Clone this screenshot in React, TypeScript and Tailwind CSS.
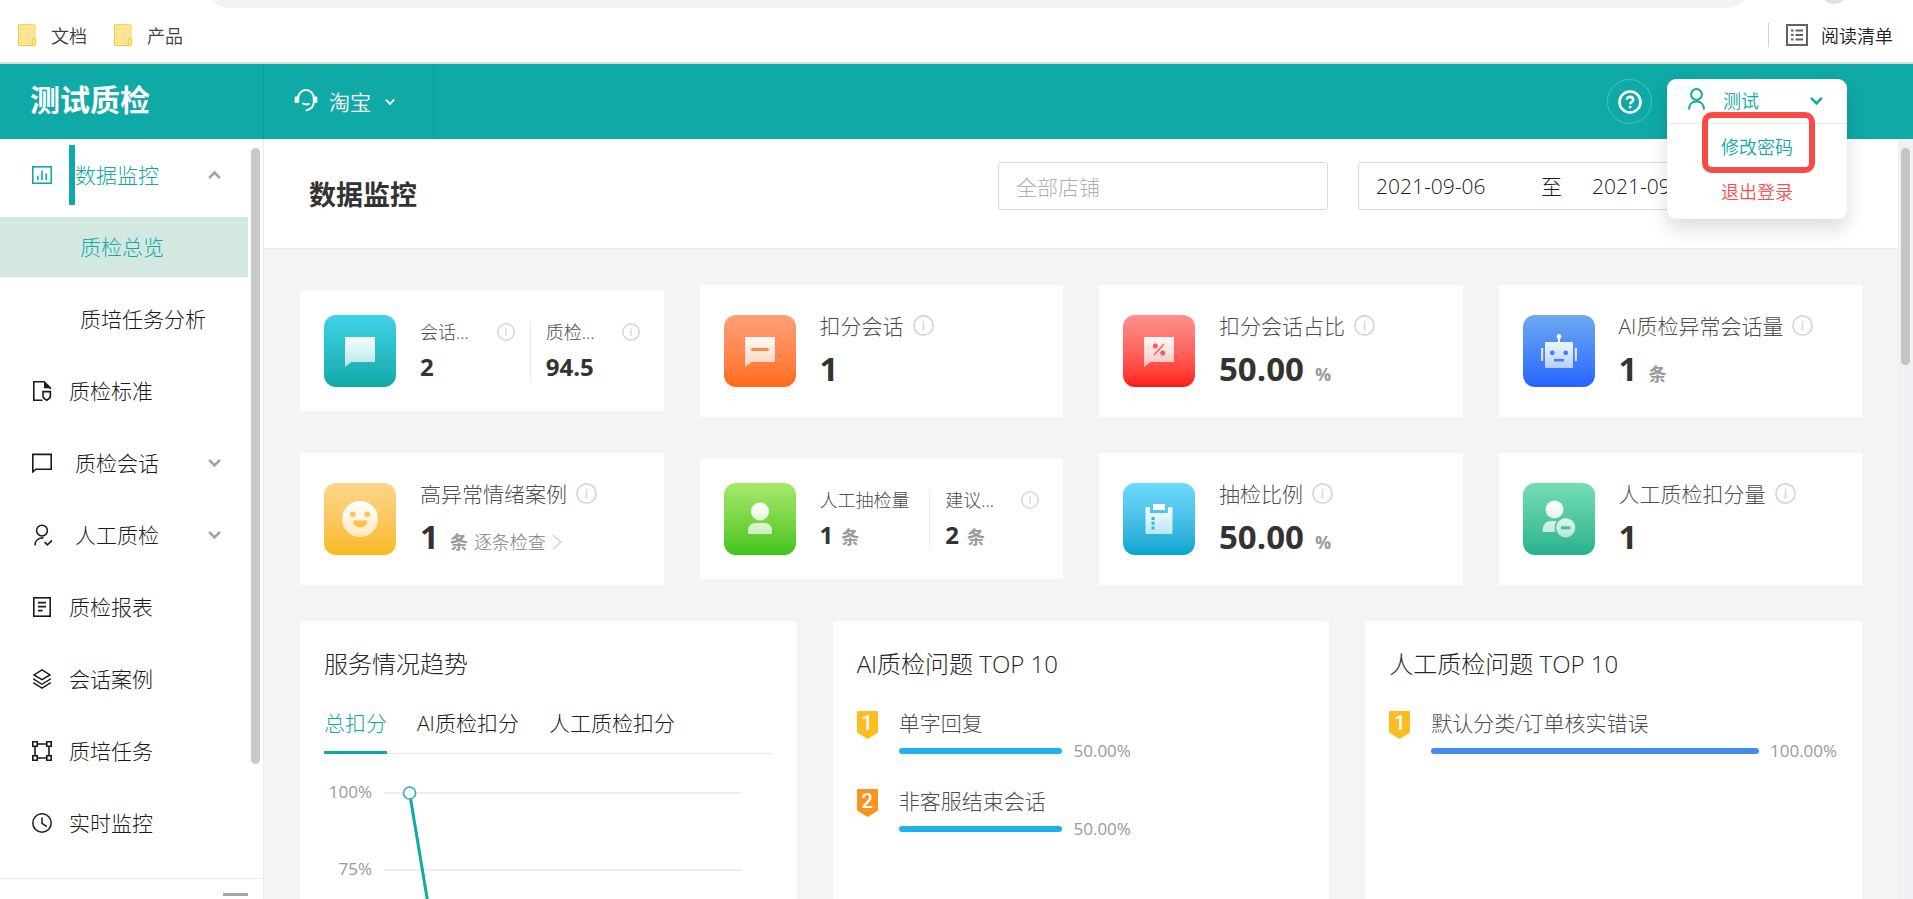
import React, { useState } from 'react';

type IconProps = { className?: string };

const ChevronDown = ({ className }: IconProps) => (
  <svg viewBox="0 0 14 10" className={className} fill="none" stroke="currentColor" strokeWidth="2.6">
    <path d="M1.2 1.6 7 7.6 12.8 1.6" />
  </svg>
);

const InfoIcon = ({ className }: IconProps) => (
  <svg viewBox="0 0 21 21" className={className} fill="none" stroke="#d6d6d6" strokeWidth="1.7">
    <circle cx="10.5" cy="10.5" r="9.6" />
    <path d="M10.5 8.8v6.6M10.5 5.4v2" />
  </svg>
);

const FolderIcon = () => (
  <svg viewBox="0 0 18 22" className="w-[18px] h-[22px]">
    <rect x="0.5" y="0.5" width="16.5" height="21" rx="1" fill="#ffe591" stroke="#f5d55f" />
    <path d="M0.5 1v20.5H17" fill="none" stroke="#f0cb4a" />
    <path d="M14.2 21.2v-5a1.6 1.6 0 0 1 3.2 0v3.6a1.5 1.5 0 0 1-1.5 1.5z" fill="#ffe591" stroke="#eec43c" />
  </svg>
);

/* ---------- sidebar icons ---------- */

const ico = 'w-5 h-5 shrink-0';

const ChartIcon = () => (
  <svg viewBox="0 0 20 20" className={ico} fill="none" stroke="currentColor" strokeWidth="1.6">
    <rect x="0.8" y="1.8" width="18.4" height="16.4" />
    <path d="M5.8 10.8v4.4M10 5.4v9.8M14.2 8.4v6.8" />
  </svg>
);

const StandardIcon = () => (
  <svg viewBox="0 0 20 20" className={ico} fill="none" stroke="currentColor" strokeWidth="1.6">
    <path d="M10.5 19.2H1.8V.8h10.4l6 6V8" />
    <path d="M12 .8v6.4h6.4z" fill="currentColor" stroke="none" />
    <path d="M11 10.6h7.4v4.4c0 2-1.6 3.2-3.7 4.2-2.1-1-3.7-2.2-3.7-4.2z" />
  </svg>
);

const MessageIcon = () => (
  <svg viewBox="0 0 20 20" className={ico} fill="none" stroke="currentColor" strokeWidth="1.6">
    <path d="M.8 1.4h18.4v14.8H4L.8 18.8z" />
  </svg>
);

const PersonCheckIcon = () => (
  <svg viewBox="0 0 20 22" className="w-5 h-[22px] shrink-0" fill="none" stroke="currentColor" strokeWidth="1.6">
    <circle cx="10" cy="6.6" r="5.4" />
    <path d="M3 21.2c0-4.6 3.4-7.4 8.6-7.4M12.6 18l2.8 2.9 4.6-4.6" />
  </svg>
);

const ReportIcon = () => (
  <svg viewBox="0 0 20 20" className={ico} fill="none" stroke="currentColor" strokeWidth="1.6">
    <rect x="1.8" y=".8" width="16.4" height="18.4" />
    <path d="M6 5.6h8M6 9.6h8M6 13.6h4.6" />
  </svg>
);

const LayersIcon = () => (
  <svg viewBox="0 0 20 21" className={ico} fill="none" stroke="currentColor" strokeWidth="1.5">
    <path d="m10 1 8.4 5.2L10 11.2 1.6 6.2zM.8 10.4 10 16l9.2-5.6M.8 14.4 10 20l9.2-5.6" />
  </svg>
);

const NodesIcon = () => (
  <svg viewBox="0 0 20 20" className={ico} fill="none" stroke="currentColor" strokeWidth="1.6">
    <path d="M5.4 3h9.2M5.4 17h9.2M3 5.4v9.2M17 5.4v9.2" />
    <path d="M.8.8h4.4v4.4H.8zM14.8.8h4.4v4.4h-4.4zM.8 14.8h4.4v4.4H.8zM14.8 14.8h4.4v4.4h-4.4z" />
  </svg>
);

const ClockIcon = () => (
  <svg viewBox="0 0 20 20" className={ico} fill="none" stroke="currentColor" strokeWidth="1.5">
    <circle cx="10" cy="10" r="9.2" />
    <path d="M10 4.6v5.8l4.8 3.2" />
  </svg>
);

/* ---------- stat card icons, drawn on a 72px tile ---------- */

const white = 'url(#fade)';
const bubble = 'M22 22h28q1 0 1 1v23q0 1-1 1H27.5L21 52V23q0-1 1-1z';

const glyphs: Record<string, React.ReactNode> = {
  chat: <path d={bubble} fill={white} />,
  chatMinus: (
    <>
      <path d={bubble} fill={white} />
      <path d="M28.5 34.5h15" stroke="#ff8546" strokeWidth="3" strokeLinecap="round" />
    </>
  ),
  chatPercent: (
    <>
      <path d={bubble} fill={white} />
      <path d="M41 29 31 40" stroke="#ff5a5a" strokeWidth="1.4" />
      <circle cx="32.3" cy="31" r="2.5" fill="#ff5a5a" />
      <circle cx="39.7" cy="38" r="2.5" fill="#ff5a5a" />
    </>
  ),
  robot: (
    <>
      <path d="M35 23h2v5h-2z" fill="#fff" />
      <circle cx="36" cy="21.5" r="2.4" fill="#fff" />
      <path d="M23 27h26q1 0 1 1v24q0 1-1 1H23q-1 0-1-1V28q0-1 1-1zM18 33h2.2v13H18zM51.8 33H54v13h-2.2z" fill={white} />
      <circle cx="29.3" cy="37.8" r="2.4" fill="#447ff5" />
      <circle cx="42.7" cy="37.8" r="2.4" fill="#447ff5" />
      <path d="M31 45.2h10" stroke="#447ff5" strokeWidth="2.6" />
    </>
  ),
  smile: (
    <>
      <circle cx="36" cy="36" r="18" fill={white} />
      <circle cx="28.8" cy="31.2" r="2.8" fill="#fbc554" />
      <circle cx="43.2" cy="31.2" r="2.8" fill="#fbc554" />
      <path d="M29 37.5h14.4a7.2 7 0 0 1-14.4 0z" fill="#fbc246" />
    </>
  ),
  person: (
    <>
      <circle cx="36" cy="28.5" r="9" fill={white} />
      <path d="M24 51v-3q0-8 8-8h8q8 0 8 8v3z" fill={white} />
    </>
  ),
  clipboard: (
    <>
      <path d="M23.5 24H27v6h18v-6h3.5q1 0 1 1v25q0 1-1 1h-25q-1 0-1-1V25q0-1 1-1z" fill={white} />
      <path d="M30 21h12v6H30z" fill="#fff" />
      <path d="M28.5 34h3v3h-3zM28.5 38.8h3v3h-3zM28.5 43.5h3v3h-3z" fill="#2bb9df" />
    </>
  ),
  personMinus: (
    <>
      <circle cx="31.5" cy="26.5" r="9" fill={white} />
      <path d="M19.5 49v-1.5q0-9.5 9.5-9.5h4.5q-2.8 5-1.5 11z" fill={white} />
      <circle cx="42.7" cy="44.8" r="9.6" fill={white} />
      <path d="M38 44.8h9.4" stroke="#42c19b" strokeWidth="3" />
    </>
  ),
};

const tileColors: Record<string, string> = {
  chat: 'from-[#3fd2e8] to-[#0fa9a6]',
  chatMinus: 'from-[#ffa077] to-[#ff6c12]',
  chatPercent: 'from-[#ff9090] to-[#ff1414]',
  robot: 'from-[#70a8f0] to-[#2962ff]',
  smile: 'from-[#fdd58a] to-[#f9b914]',
  person: 'from-[#a7e86a] to-[#3fc415]',
  clipboard: 'from-[#6fdaff] to-[#00a6cf]',
  personMinus: 'from-[#74deb4] to-[#24b28f]',
};

function Tile({ kind }: { kind: string }) {
  return (
    <div className={`w-[72px] h-[72px] shrink-0 rounded-xl bg-gradient-to-b ${tileColors[kind]}`}>
      <svg viewBox="0 0 72 72" className="w-full h-full">
        {glyphs[kind]}
      </svg>
    </div>
  );
}

/* ---------- cards ---------- */

type Stat = { label: string; value: string; unit?: string; info?: boolean; link?: string };

function StatCard({ kind, stat }: { kind: string; stat: Stat }) {
  return (
    <div className="flex gap-6 bg-white px-6 py-[30px]">
      <Tile kind={kind} />
      <div>
        <div className="flex items-center gap-[9px] h-[22px] text-[21px] text-[#4d4d4d]">
          <span className="whitespace-nowrap leading-[30px]">{stat.label}</span>
          <InfoIcon className="w-[21px] h-[21px] shrink-0 mb-px" />
        </div>
        <div className="flex items-baseline h-[42px] mt-2 leading-[48px]">
          <span className="text-[33px] font-bold text-[#333]">{stat.value}</span>
          {stat.unit && <span className="ml-[11px] text-lg leading-none font-bold text-[#999]">{stat.unit}</span>}
          {stat.link && (
            <a href="#" className="ml-1.5 flex items-center gap-1.5 text-lg leading-none text-[#808080]">
              {stat.link}
              <svg viewBox="0 0 10 16" className="w-2.5 h-4" fill="none" stroke="#d0d0d0" strokeWidth="1.3">
                <path d="M.8 1 9 8 .8 15" />
              </svg>
            </a>
          )}
        </div>
      </div>
    </div>
  );
}

function DoubleCard({ kind, stats }: { kind: string; stats: Stat[] }) {
  return (
    <div className="flex gap-6 self-center bg-white p-6">
      <Tile kind={kind} />
      <div className="flex flex-1 min-w-0 items-center">
        {stats.map((s, i) => (
          <div key={s.label} className={i === 0 ? 'w-1/2 pr-[15px]' : 'w-1/2 pl-[15px] border-l border-[#ebebeb]'}>
            <div className="flex items-center justify-between h-[22px] text-lg text-[#4d4d4d]">
              <span className="whitespace-nowrap">{s.label}</span>
              {s.info && <InfoIcon className="w-[18px] h-[18px] shrink-0" />}
            </div>
            <div className="flex items-baseline h-[38px]">
              <span className="text-2xl leading-[48px] font-bold text-[#333]">{s.value}</span>
              {s.unit && <span className="ml-2 text-lg leading-none font-bold text-[#999]">{s.unit}</span>}
            </div>
          </div>
        ))}
      </div>
    </div>
  );
}

function Panel({ title, children }: { title: string; children: React.ReactNode }) {
  return (
    <section className="h-[480px] bg-white rounded-sm px-6 pt-6">
      <h2 className="text-2xl leading-[38px] h-9 text-[#262626]">{title}</h2>
      {children}
    </section>
  );
}

function TrendChart() {
  const ticks = ['100%', '75%', '50%', '25%', '0%'];
  return (
    <div className="flex gap-3 mt-[26px] pr-[30px]">
      <div className="w-12 text-[17px] leading-6 font-normal text-right text-[#999]">
        {ticks.map((t) => (
          <div key={t} className="h-[77px]">{t}</div>
        ))}
      </div>
      <svg className="flex-1 h-[360px]">
        {ticks.map((t, i) => (
          <line key={t} x1="0" x2="100%" y1={13 + i * 77} y2={13 + i * 77} stroke="#e8e8e8" strokeWidth="1.5" />
        ))}
        <line x1="7.14%" y1="13" x2="21.42%" y2="321" stroke="#0fa9a6" strokeWidth="3" />
        <circle cx="7.14%" cy="13" r="6" fill="#fff" stroke="#2cb3b1" strokeWidth="1.6" />
      </svg>
    </div>
  );
}

type Problem = { name: string; percent: number; color: string };

function RankList({ items }: { items: Problem[] }) {
  return (
    <ol className="mt-6 flex flex-col gap-[18px]">
      {items.map((item, i) => (
        <li key={item.name} className="flex gap-[21px] h-[60px]">
          <div className="relative w-[21px] h-7 mt-1.5 shrink-0">
            <svg viewBox="0 0 21 28" className={i === 0 ? 'w-full text-[#fbbd1f]' : 'w-full text-[#fa9420]'}>
              <path d="M1 0h19q1 0 1 1v20.5L10.5 28 0 21.5V1q0-1 1-1z" fill="currentColor" />
            </svg>
            <span className="absolute inset-x-0 top-0 text-center text-xl leading-6 font-medium font-['Roboto',sans-serif] text-white">
              {i + 1}
            </span>
          </div>
          <div className="flex-1 min-w-0">
            <div className="text-[21px] leading-9 text-[#4d4d4d]">{item.name}</div>
            <div className="flex items-center h-5 mr-[79px]">
              <div className="h-1.5 rounded-full shrink-0" style={{ width: `${item.percent}%`, background: item.color }} />
              <span className="ml-[11px] text-[17px] leading-5 font-normal text-[#999]">{item.percent.toFixed(2)}%</span>
            </div>
          </div>
        </li>
      ))}
    </ol>
  );
}

/* ---------- layout ---------- */

function BookmarkBar() {
  return (
    <div className="relative flex items-center h-16 shrink-0 overflow-hidden bg-white border-b-2 border-[#d8dcde] pl-[18px] pr-5 pt-2 text-lg font-[350] text-[#3c4043]">
      <div className="absolute left-[206px] right-[162px] -top-10 h-12 rounded-full bg-[#f1f3f4]" />
      <div className="absolute right-[66px] -top-[22px] w-[26px] h-[26px] rounded-full bg-[#dee1e6]" />
      <a href="#" className="flex items-center gap-[15px]">
        <FolderIcon />
        <span className="pt-0.5">文档</span>
      </a>
      <a href="#" className="flex items-center gap-[15px] ml-[27px]">
        <FolderIcon />
        <span className="pt-0.5">产品</span>
      </a>
      <button className="ml-auto flex items-center gap-[13px] text-[#202124]">
        <span className="w-px h-6 mr-1 bg-[#cfd1d4]" />
        <svg viewBox="0 0 22 22" className="w-[22px] h-[22px]" fill="none" stroke="#5f6368" strokeWidth="2">
          <rect x="1" y="1" width="20" height="20" />
          <path d="M5 6.5h2.6M5 11h2.6M5 15.5h2.6M9.5 6.5H17M9.5 11H17M9.5 15.5H17" />
        </svg>
        <span className="pt-0.5">阅读清单</span>
      </button>
    </div>
  );
}

function UserMenu() {
  return (
    <div className="absolute top-[15px] right-[66px] z-10 w-[180px] h-[140px] rounded-[9px] bg-white shadow-[0_10px_20px_rgba(0,0,0,0.14)] text-lg font-[350] text-[#0fa9a6]">
      <button className="flex items-center w-full h-[45px] pl-[21px] pr-6 border-b border-[#ebebeb]">
        <svg viewBox="0 0 17 22" className="w-[17px] h-[22px] mb-1" fill="none" stroke="currentColor" strokeWidth="2">
          <circle cx="8.5" cy="6.5" r="5.4" />
          <path d="M1 21.5c0-5 3-8 7.5-8s7.5 3 7.5 8" />
        </svg>
        <span className="ml-[18px]">测试</span>
        <ChevronDown className="w-[13px] h-[10px] ml-auto" />
      </button>
      <div className="flex flex-col items-center pr-2">
        <button className="h-[45px] pl-2">修改密码</button>
        <button className="h-[45px] pl-2 text-[#ff4d4f]">退出登录</button>
      </div>
      <div className="absolute left-[35px] top-[33px] w-[113px] h-[61px] rounded-[10px] border-[6px] border-[#f84b48] pointer-events-none" />
    </div>
  );
}

function Header() {
  return (
    <header className="relative flex items-stretch h-[75px] shrink-0 bg-[#0fa9a6] text-white">
      <div className="w-[264px] pl-[30px] border-r border-[#0c9d9a] text-[30px] leading-[71px] font-bold">测试质检</div>
      <button className="flex items-center w-[170px] pl-[30px] border-r border-[#0c9d9a] text-[21px] font-[350]">
        <svg viewBox="0 0 24 23" className="w-6 h-[23px] mb-0.5" fill="none" stroke="currentColor" strokeWidth="2">
          <path d="M4.2 13.5V9a7.8 8 0 0 1 15.6 0v4.5q-.4 6.500-8 7.900" />
          <path d="M2.400 7.500v6.500M21.600 7.500v6.500" strokeWidth="3.4" />
          <path d="M8.4 14q3 2.600 7.200.6" />
        </svg>
        <span className="ml-[11px] pt-0.5">淘宝</span>
        <ChevronDown className="w-[10px] h-[8px] ml-3.5" />
      </button>
      <button
        aria-label="帮助"
        className="ml-auto mr-[261px] self-center w-[45px] h-[45px] rounded-full border border-white/25 flex items-center justify-center"
      >
        <svg viewBox="0 0 24 24" className="w-6 h-6" fill="none" stroke="currentColor" strokeWidth="2.6">
          <circle cx="12" cy="12" r="10.5" />
          <path d="M8.8 9.8c0-4 6.4-3.800 6.4 0 0 2.200-3.100 2.200-3.100 4.400M12.1 15.700v2.500" />
        </svg>
      </button>
      <UserMenu />
    </header>
  );
}

const leafItems = [
  { label: '质检报表', icon: <ReportIcon /> },
  { label: '会话案例', icon: <LayersIcon /> },
  { label: '质培任务', icon: <NodesIcon /> },
  { label: '实时监控', icon: <ClockIcon /> },
];

const rowClass = 'flex items-center w-full h-[60px] pl-8';
const subClass = 'flex items-center h-[60px] pt-0.5 pl-20 shrink-0';

function Sidebar() {
  return (
    <aside className="flex flex-col w-[264px] shrink-0 bg-white border-r border-[#ebebeb] text-[21px] text-[#1a1a1a]">
      <div className="flex flex-1 min-h-0 overflow-hidden">
        <nav className="flex flex-col flex-1 gap-3 pt-1.5">
          <button className={`${rowClass} text-[#0fa9a6]`}>
            <ChartIcon />
            <span className="w-1.5 h-[60px] ml-[17px] bg-[#0fa9a6]" />
            <span className="pt-0.5">数据监控</span>
            <ChevronDown className="w-[13px] h-[10px] ml-auto mr-[27px] rotate-180 text-[#a0a0a0]" />
          </button>
          <a href="#" className={`${subClass} bg-[#d2e8e1] text-[#0fa9a6]`}>质检总览</a>
          <a href="#" className={subClass}>质培任务分析</a>
          <a href="#" className={rowClass}>
            <StandardIcon />
            <span className="ml-[17px] pt-0.5">质检标准</span>
          </a>
          <button className={rowClass}>
            <MessageIcon />
            <span className="ml-[23px] pt-0.5">质检会话</span>
            <ChevronDown className="w-[13px] h-[10px] ml-auto mr-[27px] text-[#a0a0a0]" />
          </button>
          <button className={rowClass}>
            <PersonCheckIcon />
            <span className="ml-[23px] pt-0.5">人工质检</span>
            <ChevronDown className="w-[13px] h-[10px] ml-auto mr-[27px] text-[#a0a0a0]" />
          </button>
          {leafItems.map((item) => (
            <a key={item.label} href="#" className={rowClass}>
              {item.icon}
              <span className="ml-[17px] pt-0.5">{item.label}</span>
            </a>
          ))}
        </nav>
        <div className="w-[15px] shrink-0 pt-[9px] pl-[3px]">
          <div className="w-[9px] h-[616px] rounded-full bg-[#c8c8c8]" />
        </div>
      </div>
      <button aria-label="收起菜单" className="h-[21px] shrink-0 border-t border-[#ebebeb] pr-[15px] pt-[14px] flex justify-end items-start">
        <span className="w-[25px] h-[3px] bg-[#a6a6a6]" />
      </button>
    </aside>
  );
}

export default function App() {
  const tabs = ['总扣分', 'AI质检扣分', '人工质检扣分'];
  const [tab, setTab] = useState(tabs[0]);
  const [shop, setShop] = useState('');
  const [startDate, setStartDate] = useState('2021-09-06');
  const [endDate, setEndDate] = useState('2021-09-12');

  return (
    <div className="flex flex-col h-screen overflow-hidden font-light font-['Open_Sans','Noto_Sans_CJK_SC',sans-serif]">
      <BookmarkBar />
      <Header />
      <div className="flex flex-1 min-h-0">
        <Sidebar />
        <main className="flex-1 min-w-0 overflow-hidden bg-[#f3f5f4]">
          <div className="flex items-center h-[110px] pl-[45px] pr-24 bg-white border-b border-[#ebebeb]">
            <h1 className="flex-1 pt-1 text-[27px] font-bold text-[#333]">数据监控</h1>
            <div className="flex gap-[30px] mb-[15px]">
              <input
                type="text"
                aria-label="店铺"
                placeholder="全部店铺"
                value={shop}
                onChange={(e) => setShop(e.target.value)}
                className="w-[330px] h-12 px-[17px] pt-0.5 border border-[#d9d9d9] rounded-[3px] text-[21px] text-[#333] placeholder:text-[#b0b0b0]"
              />
              <div className="flex items-center w-[444px] h-12 px-[17px] pt-0.5 border border-[#d9d9d9] rounded-[3px] text-[21px] text-[#1a1a1a]">
                <input type="text" aria-label="开始日期" value={startDate} onChange={(e) => setStartDate(e.target.value)} className="w-[150px]" />
                <span className="w-[66px] pl-[15px]">至</span>
                <input type="text" aria-label="结束日期" value={endDate} onChange={(e) => setEndDate(e.target.value)} className="w-[150px]" />
              </div>
            </div>
          </div>

          <div className="p-9">
            <div className="grid grid-cols-4 gap-9">
              <DoubleCard
                kind="chat"
                stats={[
                  { label: '会话...', value: '2', info: true },
                  { label: '质检...', value: '94.5', info: true },
                ]}
              />
              <StatCard kind="chatMinus" stat={{ label: '扣分会话', value: '1' }} />
              <StatCard kind="chatPercent" stat={{ label: '扣分会话占比', value: '50.00', unit: '%' }} />
              <StatCard kind="robot" stat={{ label: 'AI质检异常会话量', value: '1', unit: '条' }} />
              <StatCard kind="smile" stat={{ label: '高异常情绪案例', value: '1', unit: '条', link: '逐条检查' }} />
              <DoubleCard
                kind="person"
                stats={[
                  { label: '人工抽检量', value: '1', unit: '条' },
                  { label: '建议...', value: '2', unit: '条', info: true },
                ]}
              />
              <StatCard kind="clipboard" stat={{ label: '抽检比例', value: '50.00', unit: '%' }} />
              <StatCard kind="personMinus" stat={{ label: '人工质检扣分量', value: '1' }} />
            </div>

            <div className="grid grid-cols-3 gap-9 mt-9">
              <Panel title="服务情况趋势">
                <div className="flex gap-[30px] h-[49px] mt-6 border-b border-[#ebebeb] text-[21px] leading-9">
                  {tabs.map((t) => (
                    <button
                      key={t}
                      onClick={() => setTab(t)}
                      className={
                        t === tab
                          ? 'h-[49px] pb-2.5 border-b-[3px] border-[#0fa9a6] text-[#0fa9a6] whitespace-nowrap'
                          : 'h-[49px] pb-[13px] text-[#1a1a1a] whitespace-nowrap'
                      }
                    >
                      {t}
                    </button>
                  ))}
                </div>
                <TrendChart />
              </Panel>
              <Panel title="AI质检问题 TOP 10">
                <RankList
                  items={[
                    { name: '单字回复', percent: 50, color: '#1fb2ea' },
                    { name: '非客服结束会话', percent: 50, color: '#1fb2ea' },
                  ]}
                />
              </Panel>
              <Panel title="人工质检问题 TOP 10">
                <RankList items={[{ name: '默认分类/订单核实错误', percent: 100, color: '#4489ee' }]} />
              </Panel>
            </div>
          </div>
        </main>
        <div className="w-[15px] shrink-0 bg-[#f0f1f5] pt-[9px] pl-[3px]">
          <div className="w-[9px] h-[217px] rounded-full bg-[#c4c4c4]" />
        </div>
      </div>
      <svg className="absolute w-0 h-0" aria-hidden="true">
        <defs>
          <linearGradient id="fade" gradientUnits="userSpaceOnUse" x1="0" y1="18" x2="0" y2="54">
            <stop offset="0" stopColor="#fff" />
            <stop offset="1" stopColor="#fff" stopOpacity="0.62" />
          </linearGradient>
        </defs>
      </svg>
    </div>
  );
}
